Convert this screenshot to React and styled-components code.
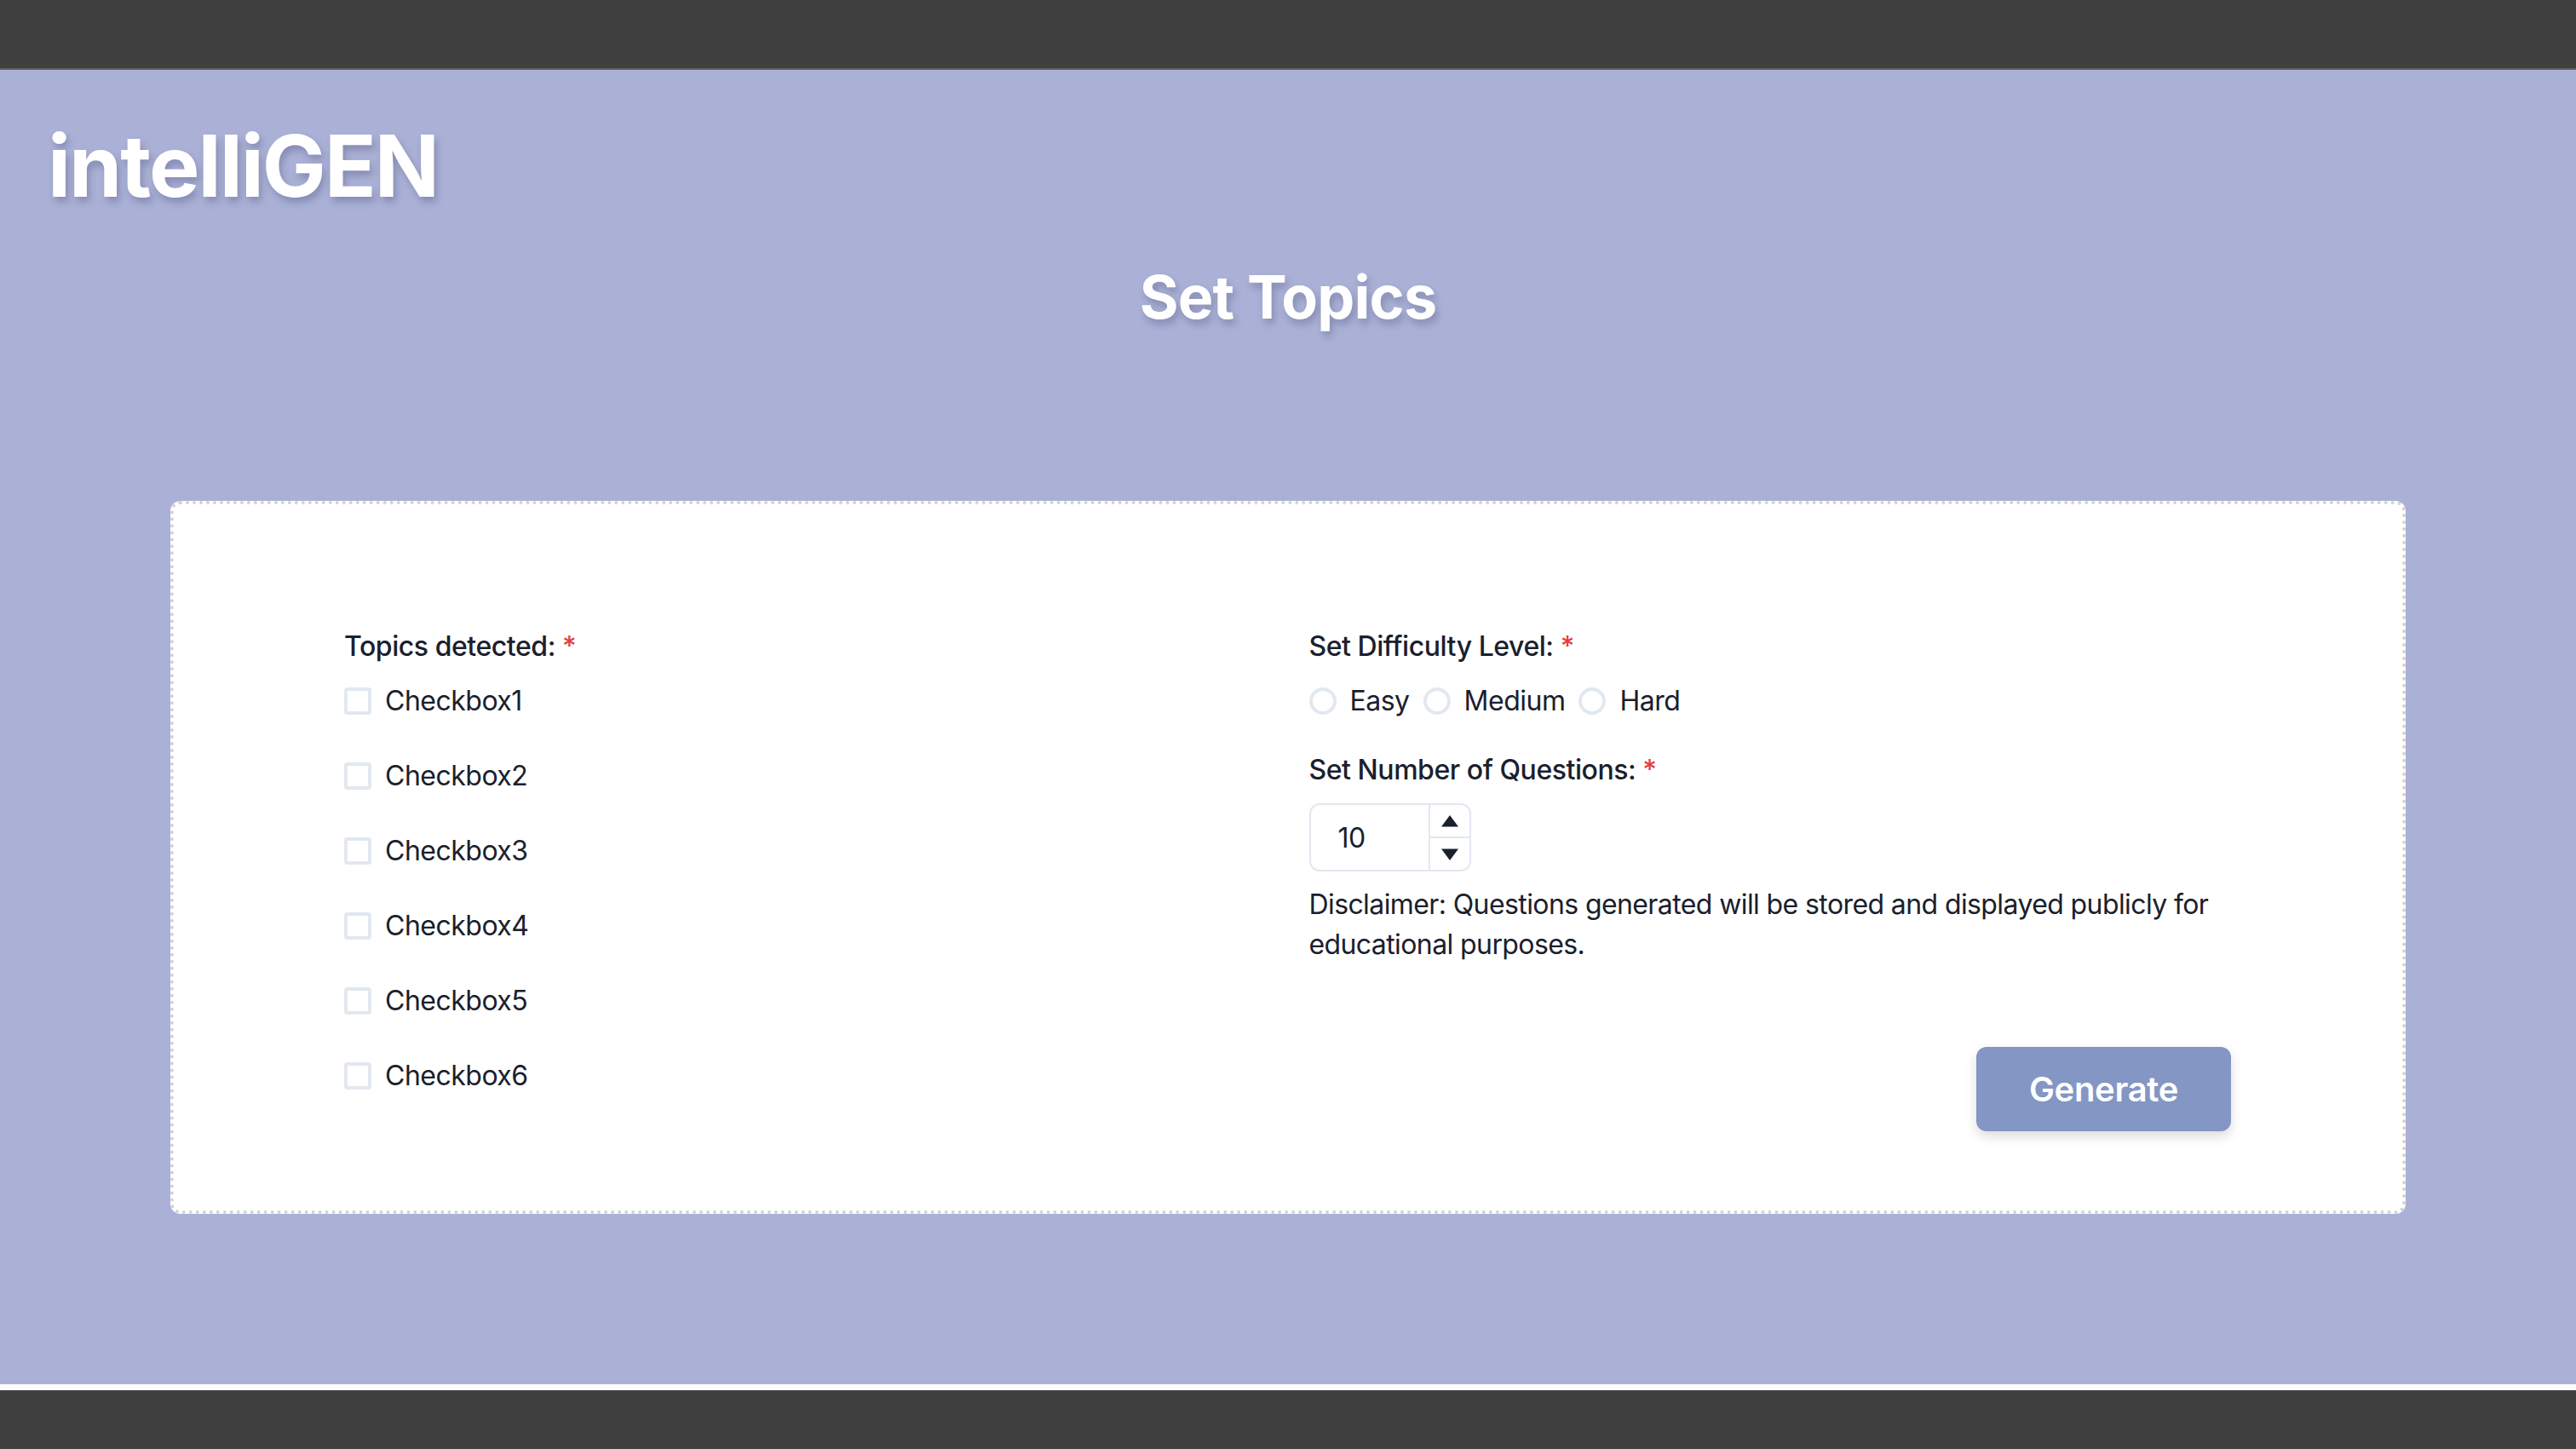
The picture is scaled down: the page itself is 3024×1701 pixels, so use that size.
import React from "react";
import styled, { createGlobalStyle } from "styled-components";

const GlobalStyle = createGlobalStyle`
  html, body {
    margin: 0;
    padding: 0;
    background: #404040;
    font-family: Inter, "Noto Sans", "Liberation Sans", sans-serif;
    color: #1a202c;
  }
  * { box-sizing: border-box; }
`;

const Page = styled.div`
  display: flex;
  flex-direction: column;
  width: 3024px;
  height: 1701px;
`;

const TopBar = styled.div`
  height: 82px;
  flex: none;
  background: #404040;
  border-bottom: 2px solid #606060;
`;

const Main = styled.main`
  flex: none;
  height: 1543px;
  background: #abb1d6;
  display: flex;
  flex-direction: column;
`;

const Brand = styled.h1`
  margin: 63px 0 0 0;
  padding-left: 56px;
  font-size: 100px;
  line-height: 100px;
  font-weight: 700;
  letter-spacing: -2px;
  color: #ffffff;
  text-shadow: 3px 6px 8px rgba(40, 44, 90, 0.28);
`;

const Title = styled.h2`
  margin: 69px 0 0 0;
  text-align: center;
  font-size: 70px;
  line-height: 70px;
  font-weight: 700;
  letter-spacing: -0.9px;
  color: #ffffff;
  text-shadow: 3px 6px 8px rgba(40, 44, 90, 0.28);
`;

const Card = styled.section`
  margin: 204px 200px 0 200px;
  height: 837px;
  background: #ffffff;
  border: 4px dotted #d3d3d3;
  border-radius: 12px;
  padding: 143px 201px 0 200px;
  display: grid;
  grid-template-columns: 1fr 1fr;
  column-gap: 50px;
  align-items: start;
`;

const Column = styled.div`
  display: flex;
  flex-direction: column;
`;

const Label = styled.div`
  font-size: 32px;
  line-height: 48px;
  font-weight: 500;
  letter-spacing: -0.45px;
  color: #1a202c;
  margin-top: ${(p) => p.$mt || 0}px;
  margin-bottom: 16px;
`;

const Required = styled.span`
  color: #e53e3e;
  margin-left: 8px;
`;

const CheckList = styled.div`
  display: flex;
  flex-direction: column;
  gap: 40px;
`;

const Option = styled.label`
  display: inline-flex;
  align-items: center;
  height: 48px;
  font-size: 32px;
  line-height: 48px;
  color: #1a202c;
  letter-spacing: -0.5px;
`;

const CheckBox = styled.input.attrs({ type: "checkbox" })`
  appearance: none;
  margin: 0 16px 0 0;
  width: 32px;
  height: 32px;
  border: 4px solid #e2e8f0;
  border-radius: 4px;
  background: #ffffff;
`;

const RadioRow = styled.div`
  display: flex;
  align-items: center;
  gap: 16px;
`;

const Radio = styled.input.attrs({ type: "radio" })`
  appearance: none;
  margin: 0 16px 0 0;
  width: 32px;
  height: 32px;
  border: 4px solid #e2e8f0;
  border-radius: 50%;
  background: #ffffff;
`;

const NumberBox = styled.div`
  display: flex;
  width: 190px;
  height: 80px;
  margin-top: -1px;
  border: 2px solid #e2e8f0;
  border-radius: 12px;
  overflow: hidden;
`;

const NumberField = styled.div`
  flex: 1;
  display: flex;
  align-items: center;
  padding-left: 32px;
  font-size: 32px;
  letter-spacing: -0.5px;
  color: #1a202c;
`;

const Stepper = styled.div`
  width: 48px;
  display: flex;
  flex-direction: column;
  border-left: 2px solid #e2e8f0;
`;

const StepButton = styled.div`
  flex: 1;
  display: flex;
  align-items: center;
  justify-content: center;
  border-top: ${(p) => (p.$bottom ? "2px solid #e2e8f0" : "none")};
`;

const Disclaimer = styled.p`
  margin: 15px 0 0 0;
  font-size: 32px;
  line-height: 47px;
  color: #1a202c;
  letter-spacing: -0.6px;
`;

const Actions = styled.div`
  display: flex;
  justify-content: flex-end;
  margin-top: 97px;
`;

const GenerateButton = styled.button`
  width: 299px;
  height: 99px;
  border: none;
  border-radius: 12px;
  background: #8396c4;
  color: #ffffff;
  font-family: Inter, "Noto Sans", sans-serif;
  font-size: 40px;
  font-weight: 600;
  letter-spacing: -0.3px;
  box-shadow: 0 6px 14px rgba(0, 0, 0, 0.14);
  cursor: pointer;
`;

const WhiteStrip = styled.div`
  height: 7px;
  flex: none;
  background: #ffffff;
`;

const Footer = styled.div`
  flex: 1;
  background: #404040;
`;

const Triangle = ({ down }) => (
  <svg width="22" height="16" viewBox="0 0 22 16">
    {down ? (
      <path d="M1 1.5h20L11 15z" fill="#1a202c" />
    ) : (
      <path d="M11 1L21 14.5H1z" fill="#1a202c" />
    )}
  </svg>
);

const topics = ["Checkbox1", "Checkbox2", "Checkbox3", "Checkbox4", "Checkbox5", "Checkbox6"];
const levels = ["Easy", "Medium", "Hard"];

export default function App() {
  return (
    <>
      <GlobalStyle />
      <Page>
        <TopBar />
        <Main>
          <Brand>intelliGEN</Brand>
          <Title>Set Topics</Title>
          <Card>
            <Column>
              <Label>
                Topics detected:<Required>*</Required>
              </Label>
              <CheckList>
                {topics.map((t) => (
                  <Option key={t}>
                    <CheckBox />
                    {t}
                  </Option>
                ))}
              </CheckList>
            </Column>
            <Column>
              <Label>
                Set Difficulty Level:<Required>*</Required>
              </Label>
              <RadioRow>
                {levels.map((l) => (
                  <Option key={l}>
                    <Radio name="level" />
                    {l}
                  </Option>
                ))}
              </RadioRow>
              <Label $mt={33}>
                Set Number of Questions:<Required>*</Required>
              </Label>
              <NumberBox>
                <NumberField>10</NumberField>
                <Stepper>
                  <StepButton>
                    <Triangle />
                  </StepButton>
                  <StepButton $bottom>
                    <Triangle down />
                  </StepButton>
                </Stepper>
              </NumberBox>
              <Disclaimer>
                Disclaimer: Questions generated will be stored and displayed publicly for educational purposes.
              </Disclaimer>
              <Actions>
                <GenerateButton>Generate</GenerateButton>
              </Actions>
            </Column>
          </Card>
        </Main>
        <WhiteStrip />
        <Footer />
      </Page>
    </>
  );
}
